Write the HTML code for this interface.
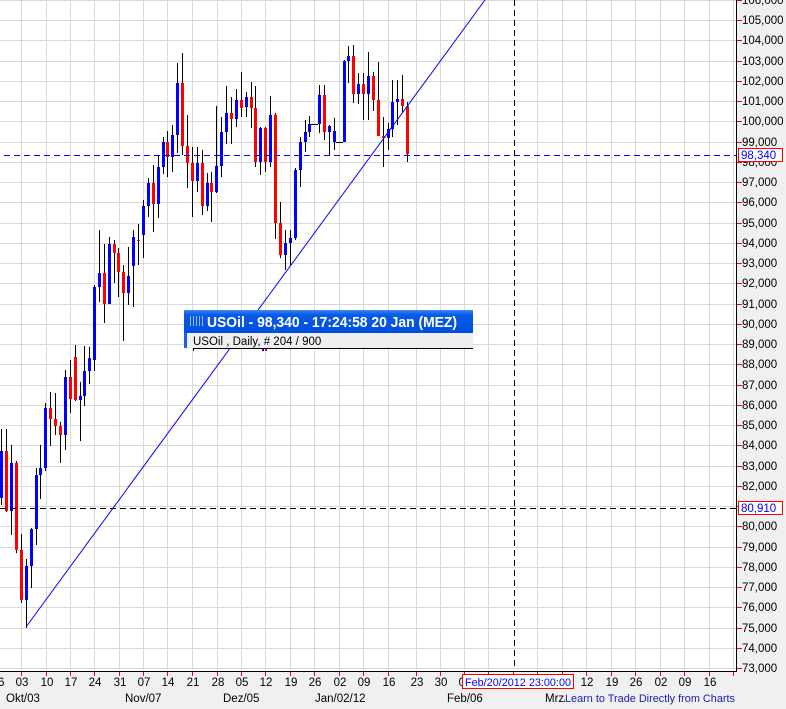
<!DOCTYPE html>
<html><head><meta charset="utf-8"><style>
html,body{margin:0;padding:0;width:786px;height:709px;overflow:hidden;background:#f0f0f0}
svg{display:block}
text{font-family:"Liberation Sans",sans-serif}
</style></head><body>
<svg width="786" height="709" xmlns="http://www.w3.org/2000/svg" shape-rendering="crispEdges">
<rect x="0" y="0" width="786" height="709" fill="#f0f0f0"/>
<rect x="0" y="0" width="736" height="671" fill="#fff"/>
<g stroke="#d9d9d9" stroke-width="1" id="grid">
</g>
<g id="cand"></g>
<g id="lines"></g>
<g id="axis"></g>
<script>
(function(){
var NS="http://www.w3.org/2000/svg";
function el(p,n,a,t){var e=document.createElementNS(NS,n);for(var k in a)e.setAttribute(k,a[k]);if(t!=null)e.textContent=t;p.appendChild(e);return e;}
var grid=document.getElementById('grid'),cand=document.getElementById('cand'),lines=document.getElementById('lines'),axis=document.getElementById('axis');
var vx=[21,46,70,94,119,143,167,192,217,241,265,290,314,339,363,388,416,440,464,488,537,562,586,611,635,660,684,709,733];
vx.forEach(function(x){el(grid,'line',{x1:x+.5,y1:0,x2:x+.5,y2:670});});
function py(p){return Math.round(20+(105-p)*20.25);}
for(var p=73;p<=106;p++){var y=py(p);el(grid,'line',{x1:0,y1:y+.5,x2:736,y2:y+.5});}
var C=[
[1,429,505,451,498,'b'],[6,429,512,451,511,'r'],[11,445,535,463,511,'b'],[16,461,553,463,550,'r'],
[21,534,603,550,600,'r'],[26,559,628,566,600,'b'],[31,528,588,529,566,'b'],[36,468,545,475,529,'b'],
[40,445,499,468,475,'b'],[45,403,471,408,468,'b'],[50,392,446,408,419,'r'],[55,393,435,419,426,'r'],
[60,422,463,426,435,'r'],[65,370,450,377,435,'b'],[70,360,413,377,399,'r'],[75,345,401,357,400,'r'],
[80,382,441,396,400,'b'],[84,346,406,371,396,'b'],[89,347,384,358,371,'b'],[94,285,371,287,360,'b'],
[99,230,302,273,287,'b'],[104,244,323,273,304,'r'],[109,237,304,244,304,'b'],[114,240,283,244,253,'r'],
[118,248,297,253,272,'r'],[123,265,341,272,293,'r'],[128,247,305,276,293,'b'],[133,230,307,237,266,'b'],
[138,224,265,240,241,'r'],[143,200,258,206,235,'b'],[148,178,217,183,206,'b'],[153,165,232,183,204,'r'],
[158,155,218,167,204,'b'],[163,137,174,142,167,'b'],[167,131,177,142,157,'r'],[172,125,172,135,157,'b'],
[177,63,153,83,135,'b'],[182,53,155,83,146,'r'],[187,115,188,146,163,'r'],[192,147,217,163,181,'r'],
[197,147,192,163,181,'b'],[202,150,215,163,206,'r'],[207,173,211,183,206,'b'],[211,172,222,183,192,'r'],
[216,106,193,166,192,'b'],[221,117,177,132,166,'b'],[226,86,144,113,132,'b'],[231,97,144,113,119,'r'],
[236,89,127,100,119,'b'],[241,72,117,100,108,'r'],[246,92,117,97,107,'b'],[251,82,128,97,108,'r'],
[255,86,167,108,162,'r'],[260,127,175,128,162,'b'],[265,127,172,128,162,'r'],[270,96,167,115,162,'b'],
[275,113,239,115,223,'r'],[280,202,258,223,255,'r'],[285,230,270,243,255,'b'],[290,230,265,238,243,'b'],
[295,168,240,170,238,'b'],[300,137,187,142,170,'b'],[305,120,152,132,142,'b'],[309,116,137,124,132,'b'],
[314,124,125,124,125,'k'],[319,85,133,95,124,'b'],[324,85,140,95,132,'r'],[329,125,156,126,132,'b'],
[334,118,150,131,142,'b'],[339,142,143,142,143,'k'],[344,60,142,61,142,'b'],[348,46,83,56,61,'b'],
[353,45,103,56,94,'r'],[358,73,104,84,94,'b'],[363,73,120,84,94,'r'],[368,52,120,76,94,'b'],
[373,72,111,76,100,'r'],[378,62,136,100,136,'r'],[383,117,167,136,138,'r'],[388,123,150,129,138,'b'],
[392,80,137,102,129,'b'],[397,80,125,99,102,'b'],[402,75,113,99,106,'r'],[407,102,162,106,154,'r']
];
C.forEach(function(c){
 var x=c[0];el(cand,'rect',{x:x,y:c[1],width:1,height:c[2]-c[1],fill:'#000'});
 var col=c[5]=='b'?'#0000ff':(c[5]=='r'?'#ff0000':'#000');
 var h=Math.max(1,c[4]-c[3]);
 if(c[5]=='k'){el(cand,'rect',{x:x-3,y:c[3],width:7,height:1,fill:'#000'});}
 else el(cand,'rect',{x:x-1,y:c[3],width:3,height:h,fill:col});
});
// lines
for(var x=4;x<736;x+=10){el(lines,'rect',{x:x,y:155,width:6,height:1,fill:'#0000ff'});}
el(lines,'line',{x1:0,y1:508.5,x2:736,y2:508.5,stroke:'#000','stroke-dasharray':'6 4'});
el(lines,'line',{x1:514.5,y1:0,x2:514.5,y2:670,stroke:'#000','stroke-dasharray':'6 4'});
el(lines,'line',{x1:26,y1:627,x2:485,y2:0,stroke:'#0000ff','stroke-width':1,'shape-rendering':'auto'});
// axes
el(axis,'rect',{x:736,y:0,width:50,height:709,fill:'#f0f0f0'});
el(axis,'rect',{x:0,y:672,width:736,height:37,fill:'#f0f0f0'});
el(axis,'line',{x1:736.5,y1:0,x2:736.5,y2:672,stroke:'#000'});
el(axis,'line',{x1:0,y1:671.5,x2:737,y2:671.5,stroke:'#000'});
for(var p=73;p<=106;p++){var y=py(p);
 el(axis,'line',{x1:737,y1:y+.5,x2:742,y2:y+.5,stroke:'#ff0000'});
 el(axis,'text',{x:742,y:y+4,'font-size':'11.5px',fill:'#000'},p+',000');}
vx.concat([513]).forEach(function(x){el(axis,'line',{x1:x+.5,y1:672,x2:x+.5,y2:676,stroke:'#ff0000'});});
var D=[[-3,'26'],[21,'03'],[46,'10'],[70,'17'],[94,'24'],[119,'31'],[143,'07'],[167,'14'],[192,'21'],[217,'28'],[241,'05'],[265,'12'],[290,'19'],[314,'26'],[339,'02'],[363,'09'],[388,'16'],[416,'23'],[440,'30'],[464,'06'],[586,'12'],[611,'19'],[635,'26'],[660,'02'],[684,'09'],[709,'16']];
D.forEach(function(d){el(axis,'text',{x:d[0]+1,y:686,'font-size':'11.5px','text-anchor':'middle',fill:'#000'},d[1]);});
[[6,'Okt/03'],[125,'Nov/07'],[223,'Dez/05'],[315,'Jan/02/12'],[447,'Feb/06'],[545,'Mrz/05']].forEach(function(d){el(axis,'text',{x:d[0],y:702,'font-size':'11.5px',fill:'#000'},d[1]);});
el(axis,'rect',{x:565,y:690,width:171,height:16,fill:'#f0f0f0'});
el(axis,'text',{x:565,y:702,'font-size':'11px',fill:'#1a1ab4',textLength:170,lengthAdjust:'spacingAndGlyphs'},'Learn to Trade Directly from Charts');
el(axis,'rect',{x:462.5,y:674.5,width:111,height:14,fill:'#fff',stroke:'#ff0000'});
el(axis,'text',{x:465,y:686,'font-size':'11px',fill:'#0000ff',textLength:106,lengthAdjust:'spacingAndGlyphs'},'Feb/20/2012 23:00:00');
el(axis,'rect',{x:738.5,y:148.5,width:44,height:13,fill:'#fff',stroke:'#ff0000'});
el(axis,'text',{x:741,y:159,'font-size':'11.5px',fill:'#0000ff'},'98,340');
el(axis,'rect',{x:738.5,y:501.5,width:44,height:13,fill:'#fff',stroke:'#ff0000'});
el(axis,'text',{x:741,y:512,'font-size':'11.5px',fill:'#0000ff'},'80,910');
})();
</script>
<defs><linearGradient id="tb" x1="0" y1="0" x2="0" y2="1"><stop offset="0" stop-color="#3d8af5"/><stop offset="0.2" stop-color="#0a5ae6"/><stop offset="1" stop-color="#0050e0"/></linearGradient></defs>
<rect x="184" y="310" width="289" height="23" fill="url(#tb)"/>
<rect x="184" y="333" width="3" height="15" fill="#1760e8"/>
<rect x="187" y="333" width="286" height="15" fill="#efefef"/>
<line x1="193" y1="348.5" x2="473" y2="348.5" stroke="#000"/>
<line x1="193.5" y1="348" x2="193.5" y2="351" stroke="#000"/>
<g fill="#9bb8f0"><rect x="190" y="316" width="1" height="10"/><rect x="193" y="316" width="1" height="10"/><rect x="196" y="316" width="1" height="10"/><rect x="199" y="316" width="1" height="10"/><rect x="202" y="316" width="1" height="10"/></g>
<text x="207" y="327" font-size="14.5px" font-weight="bold" fill="#fff" textLength="250" lengthAdjust="spacingAndGlyphs">USOil - 98,340 - 17:24:58  20 Jan (MEZ)</text>
<text x="193" y="345" font-size="11.5px" fill="#000">USOil , Daily, # 204 / 900</text>
<rect x="262" y="349" width="2" height="2" fill="#0000ff"/><rect x="265" y="349" width="2" height="2" fill="#ff0000"/>
</svg>
</body></html>
